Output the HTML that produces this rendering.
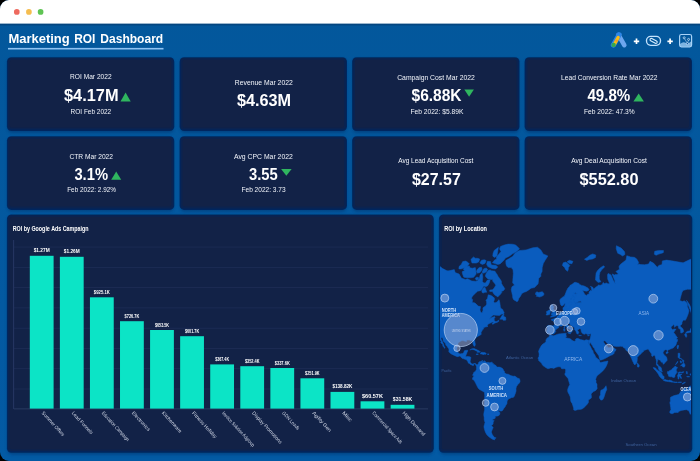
<!DOCTYPE html>
<html lang="en"><head><meta charset="utf-8"><title>Marketing ROI Dashboard</title>
<style>html,body{margin:0;padding:0;background:#000;width:700px;height:461px;overflow:hidden}svg{display:block;will-change:transform}text{font-family:'Liberation Sans', sans-serif;fill:#fff}.lbl{font-size:7px;fill:#f2f5fb}.val{font-size:15.6px;font-weight:bold}.pt{font-size:6.6px;font-weight:bold;fill:#fff}.bv{font-size:4.5px;font-weight:bold;fill:#fff}.xl{font-size:5px;fill:#d6dcea}.ml{font-size:4.5px;fill:#9fc4f2}</style></head><body>
<svg width="700" height="461" viewBox="0 0 700 461">
<defs>
<clipPath id="win"><rect x="0" y="0" width="700" height="461" rx="9" ry="9"/></clipPath>
<linearGradient id="bg" x1="0" y1="0" x2="0" y2="1"><stop offset="0" stop-color="#03579b"/><stop offset="1" stop-color="#035aa4"/></linearGradient>
<filter id="sh" x="-5%" y="-5%" width="110%" height="110%"><feGaussianBlur stdDeviation="0.75"/></filter>
<filter id="sh2" x="-5%" y="-10%" width="110%" height="125%"><feGaussianBlur stdDeviation="1.6"/></filter>
<clipPath id="mapclip"><rect x="440" y="232" width="251" height="219" rx="3"/></clipPath>
<linearGradient id="tsh" x1="0" y1="0" x2="0" y2="1"><stop offset="0" stop-color="#04305f" stop-opacity="0.7"/><stop offset="1" stop-color="#04305f" stop-opacity="0"/></linearGradient>
</defs>
<g clip-path="url(#win)">
<rect x="0" y="0" width="700" height="461" fill="url(#bg)"/>
<rect x="0" y="23.4" width="700" height="3" fill="url(#tsh)"/>
<rect x="0" y="0" width="700" height="23.6" fill="#ffffff"/>
<circle cx="16.8" cy="11.9" r="2.85" fill="#ee6a5f"/>
<circle cx="28.9" cy="11.9" r="2.85" fill="#f5bd4f"/>
<circle cx="40.6" cy="11.9" r="2.85" fill="#5fc454"/>
<text x="8.4" y="43.0" style="font-size:13.1px;font-weight:bold" textLength="61.3" lengthAdjust="spacingAndGlyphs">Marketing</text>
<text x="74.2" y="43.0" style="font-size:13.1px;font-weight:bold" textLength="21.2" lengthAdjust="spacingAndGlyphs">ROI</text>
<text x="100.3" y="43.0" style="font-size:13.1px;font-weight:bold" textLength="62.9" lengthAdjust="spacingAndGlyphs">Dashboard</text>
<rect x="8" y="47.9" width="155.5" height="1.6" fill="#8fc3f3"/>
<rect x="7.5" y="59.0" width="166.2" height="73.7" rx="4.5" fill="#04285e" opacity="0.45" filter="url(#sh2)"/>
<rect x="6.9" y="57.2" width="167.39999999999998" height="73.8" rx="4.5" fill="#04285e" filter="url(#sh)"/>
<rect x="8" y="58" width="165.2" height="71.5" rx="3.2" fill="#0b2350"/>
<rect x="9.8" y="59.8" width="161.6" height="67.9" rx="2" fill="#122247"/>
<rect x="180.2" y="59.0" width="166.2" height="73.7" rx="4.5" fill="#04285e" opacity="0.45" filter="url(#sh2)"/>
<rect x="179.6" y="57.2" width="167.39999999999998" height="73.8" rx="4.5" fill="#04285e" filter="url(#sh)"/>
<rect x="180.7" y="58" width="165.2" height="71.5" rx="3.2" fill="#0b2350"/>
<rect x="182.5" y="59.8" width="161.6" height="67.9" rx="2" fill="#122247"/>
<rect x="352.7" y="59.0" width="166.2" height="73.7" rx="4.5" fill="#04285e" opacity="0.45" filter="url(#sh2)"/>
<rect x="352.09999999999997" y="57.2" width="167.39999999999998" height="73.8" rx="4.5" fill="#04285e" filter="url(#sh)"/>
<rect x="353.2" y="58" width="165.2" height="71.5" rx="3.2" fill="#0b2350"/>
<rect x="355.0" y="59.8" width="161.6" height="67.9" rx="2" fill="#122247"/>
<rect x="525.2" y="59.0" width="166.2" height="73.7" rx="4.5" fill="#04285e" opacity="0.45" filter="url(#sh2)"/>
<rect x="524.6" y="57.2" width="167.39999999999998" height="73.8" rx="4.5" fill="#04285e" filter="url(#sh)"/>
<rect x="525.7" y="58" width="165.2" height="71.5" rx="3.2" fill="#0b2350"/>
<rect x="527.5" y="59.8" width="161.6" height="67.9" rx="2" fill="#122247"/>
<rect x="7.5" y="138.0" width="166.2" height="73.60000000000001" rx="4.5" fill="#04285e" opacity="0.45" filter="url(#sh2)"/>
<rect x="6.9" y="136.2" width="167.39999999999998" height="73.7" rx="4.5" fill="#04285e" filter="url(#sh)"/>
<rect x="8" y="137" width="165.2" height="71.4" rx="3.2" fill="#0b2350"/>
<rect x="9.8" y="138.8" width="161.6" height="67.80000000000001" rx="2" fill="#122247"/>
<rect x="180.2" y="138.0" width="166.2" height="73.60000000000001" rx="4.5" fill="#04285e" opacity="0.45" filter="url(#sh2)"/>
<rect x="179.6" y="136.2" width="167.39999999999998" height="73.7" rx="4.5" fill="#04285e" filter="url(#sh)"/>
<rect x="180.7" y="137" width="165.2" height="71.4" rx="3.2" fill="#0b2350"/>
<rect x="182.5" y="138.8" width="161.6" height="67.80000000000001" rx="2" fill="#122247"/>
<rect x="352.7" y="138.0" width="166.2" height="73.60000000000001" rx="4.5" fill="#04285e" opacity="0.45" filter="url(#sh2)"/>
<rect x="352.09999999999997" y="136.2" width="167.39999999999998" height="73.7" rx="4.5" fill="#04285e" filter="url(#sh)"/>
<rect x="353.2" y="137" width="165.2" height="71.4" rx="3.2" fill="#0b2350"/>
<rect x="355.0" y="138.8" width="161.6" height="67.80000000000001" rx="2" fill="#122247"/>
<rect x="525.2" y="138.0" width="166.2" height="73.60000000000001" rx="4.5" fill="#04285e" opacity="0.45" filter="url(#sh2)"/>
<rect x="524.6" y="136.2" width="167.39999999999998" height="73.7" rx="4.5" fill="#04285e" filter="url(#sh)"/>
<rect x="525.7" y="137" width="165.2" height="71.4" rx="3.2" fill="#0b2350"/>
<rect x="527.5" y="138.8" width="161.6" height="67.80000000000001" rx="2" fill="#122247"/>
<rect x="7.5" y="216.2" width="425.7" height="238.2" rx="4.5" fill="#04285e" opacity="0.45" filter="url(#sh2)"/>
<rect x="6.9" y="214.39999999999998" width="426.9" height="238.3" rx="4.5" fill="#04285e" filter="url(#sh)"/>
<rect x="8" y="215.2" width="424.7" height="236" rx="3.2" fill="#0b2350"/>
<rect x="9.8" y="217.0" width="421.09999999999997" height="232.4" rx="2" fill="#122247"/>
<rect x="439.5" y="216.2" width="252.2" height="238.2" rx="4.5" fill="#04285e" opacity="0.45" filter="url(#sh2)"/>
<rect x="438.9" y="214.39999999999998" width="253.39999999999998" height="238.3" rx="4.5" fill="#04285e" filter="url(#sh)"/>
<rect x="440" y="215.2" width="251.2" height="236" rx="3.2" fill="#0b2350"/>
<rect x="441.8" y="217.0" width="247.6" height="232.4" rx="2" fill="#122247"/>
<text class="lbl" x="70.1" y="79.4" textLength="41.5" lengthAdjust="spacingAndGlyphs">ROI Mar 2022</text>
<text class="val" x="64" y="101.4" textLength="54.5" lengthAdjust="spacingAndGlyphs">$4.17M</text>
<path d="M125.6 92.6 L130.7 101.5 L120.5 101.5 Z" fill="#2fb65f"/>
<text class="lbl" x="70.6" y="113.6" textLength="40.6" lengthAdjust="spacingAndGlyphs">ROI Feb 2022</text>
<text class="lbl" x="234.8" y="85.2" textLength="58.0" lengthAdjust="spacingAndGlyphs">Revenue Mar 2022</text>
<text class="val" x="236.9" y="106" textLength="54.1" lengthAdjust="spacingAndGlyphs">$4.63M</text>
<text class="lbl" x="397.2" y="79.6" textLength="77.6" lengthAdjust="spacingAndGlyphs">Campaign Cost Mar 2022</text>
<text class="val" x="411.5" y="100.9" textLength="50.1" lengthAdjust="spacingAndGlyphs">$6.88K</text>
<path d="M464.3 89.6 L473.9 89.6 L469.1 96.8 Z" fill="#2fb65f"/>
<text class="lbl" x="410.4" y="113.6" textLength="53.0" lengthAdjust="spacingAndGlyphs">Feb 2022: $5.89K</text>
<text class="lbl" x="561" y="79.6" textLength="96.5" lengthAdjust="spacingAndGlyphs">Lead Conversion Rate Mar 2022</text>
<text class="val" x="587.4" y="100.9" textLength="42.9" lengthAdjust="spacingAndGlyphs">49.8%</text>
<path d="M638.65 93.4 L643.9 101.6 L633.4 101.6 Z" fill="#2fb65f"/>
<text class="lbl" x="584" y="113.6" textLength="50.6" lengthAdjust="spacingAndGlyphs">Feb 2022: 47.3%</text>
<text class="lbl" x="69.4" y="158.6" textLength="43.6" lengthAdjust="spacingAndGlyphs">CTR Mar 2022</text>
<text class="val" x="74.4" y="179.8" textLength="33.6" lengthAdjust="spacingAndGlyphs">3.1%</text>
<path d="M116.2 171.6 L121.2 179.8 L111.2 179.8 Z" fill="#2fb65f"/>
<text class="lbl" x="67.2" y="192.4" textLength="48.8" lengthAdjust="spacingAndGlyphs">Feb 2022: 2.92%</text>
<text class="lbl" x="234" y="158.6" textLength="58.8" lengthAdjust="spacingAndGlyphs">Avg CPC Mar 2022</text>
<text class="val" x="249" y="179.6" textLength="28.8" lengthAdjust="spacingAndGlyphs">3.55</text>
<path d="M281.1 168.9 L291.6 168.9 L286.35 175.8 Z" fill="#2fb65f"/>
<text class="lbl" x="241.5" y="192.4" textLength="44.1" lengthAdjust="spacingAndGlyphs">Feb 2022: 3.73</text>
<text class="lbl" x="398.2" y="163" textLength="75.2" lengthAdjust="spacingAndGlyphs">Avg Lead Acquisition Cost</text>
<text class="val" x="412" y="184.8" textLength="48.8" lengthAdjust="spacingAndGlyphs">$27.57</text>
<text class="lbl" x="571.2" y="163" textLength="75.6" lengthAdjust="spacingAndGlyphs">Avg Deal Acquisition Cost</text>
<text class="val" x="579.5" y="184.8" textLength="59.0" lengthAdjust="spacingAndGlyphs">$552.80</text>
<text class="pt" x="12.7" y="231" textLength="75.9" lengthAdjust="spacingAndGlyphs">ROI by Google Ads Campaign</text>
<rect x="14" y="246.70" width="414" height="0.7" fill="#202f58"/>
<rect x="14" y="266.98" width="414" height="0.7" fill="#202f58"/>
<rect x="14" y="287.26" width="414" height="0.7" fill="#202f58"/>
<rect x="14" y="307.54" width="414" height="0.7" fill="#202f58"/>
<rect x="14" y="327.82" width="414" height="0.7" fill="#202f58"/>
<rect x="14" y="348.10" width="414" height="0.7" fill="#202f58"/>
<rect x="14" y="368.38" width="414" height="0.7" fill="#202f58"/>
<rect x="14" y="388.66" width="414" height="0.7" fill="#202f58"/>
<rect x="14" y="408.5" width="414" height="0.8" fill="#2f4069"/>
<rect x="13.3" y="240" width="0.8" height="169" fill="#2d3c6c"/>
<rect x="29.80" y="255.8" width="23.8" height="152.80" fill="#0ce4c6"/>
<text class="bv" x="33.70" y="252.30" textLength="16" lengthAdjust="spacingAndGlyphs">$1.27M</text>
<text class="xl" transform="translate(42.50 412.2) rotate(47.5)" x="0" y="1.6" textLength="31.6" lengthAdjust="spacingAndGlyphs">Summer Offers</text>
<rect x="59.87" y="256.8" width="23.8" height="151.80" fill="#0ce4c6"/>
<text class="bv" x="63.87" y="253.30" textLength="15.8" lengthAdjust="spacingAndGlyphs">$1.26M</text>
<text class="xl" transform="translate(72.57 412.2) rotate(47.5)" x="0" y="1.6" textLength="28.9" lengthAdjust="spacingAndGlyphs">Lead Funnels</text>
<rect x="89.94" y="297.3" width="23.8" height="111.30" fill="#0ce4c6"/>
<text class="bv" x="93.84" y="293.80" textLength="16" lengthAdjust="spacingAndGlyphs">$925.1K</text>
<text class="xl" transform="translate(102.64 412.2) rotate(47.5)" x="0" y="1.6" textLength="38.3" lengthAdjust="spacingAndGlyphs">Education Campaign</text>
<rect x="120.01" y="321.2" width="23.8" height="87.40" fill="#0ce4c6"/>
<text class="bv" x="124.61" y="317.70" textLength="14.6" lengthAdjust="spacingAndGlyphs">$726.7K</text>
<text class="xl" transform="translate(132.71 412.2) rotate(47.5)" x="0" y="1.6" textLength="24.6" lengthAdjust="spacingAndGlyphs">Electronics</text>
<rect x="150.08" y="330" width="23.8" height="78.60" fill="#0ce4c6"/>
<text class="bv" x="154.88" y="326.50" textLength="14.2" lengthAdjust="spacingAndGlyphs">$653.5K</text>
<text class="xl" transform="translate(162.78 412.2) rotate(47.5)" x="0" y="1.6" textLength="27.0" lengthAdjust="spacingAndGlyphs">Kitchenware</text>
<rect x="180.15" y="336.2" width="23.8" height="72.40" fill="#0ce4c6"/>
<text class="bv" x="184.95" y="332.70" textLength="14.2" lengthAdjust="spacingAndGlyphs">$601.7K</text>
<text class="xl" transform="translate(192.85 412.2) rotate(47.5)" x="0" y="1.6" textLength="34.5" lengthAdjust="spacingAndGlyphs">Fitness Holiday</text>
<rect x="210.22" y="364.4" width="23.8" height="44.20" fill="#0ce4c6"/>
<text class="bv" x="215.22" y="360.90" textLength="13.8" lengthAdjust="spacingAndGlyphs">$367.4K</text>
<text class="xl" transform="translate(222.92 412.2) rotate(47.5)" x="0" y="1.6" textLength="45.5" lengthAdjust="spacingAndGlyphs">Invoice Solution Adgroup</text>
<rect x="240.29" y="366.2" width="23.8" height="42.40" fill="#0ce4c6"/>
<text class="bv" x="244.89" y="362.70" textLength="14.6" lengthAdjust="spacingAndGlyphs">$352.4K</text>
<text class="xl" transform="translate(252.99 412.2) rotate(47.5)" x="0" y="1.6" textLength="41.7" lengthAdjust="spacingAndGlyphs">Display Promotions</text>
<rect x="270.36" y="368" width="23.8" height="40.60" fill="#0ce4c6"/>
<text class="bv" x="274.76" y="364.50" textLength="15" lengthAdjust="spacingAndGlyphs">$337.6K</text>
<text class="xl" transform="translate(283.06 412.2) rotate(47.5)" x="0" y="1.6" textLength="23.2" lengthAdjust="spacingAndGlyphs">GDN Leads</text>
<rect x="300.43" y="378.3" width="23.8" height="30.30" fill="#0ce4c6"/>
<text class="bv" x="305.03" y="374.80" textLength="14.6" lengthAdjust="spacingAndGlyphs">$251.9K</text>
<text class="xl" transform="translate(313.13 412.2) rotate(47.5)" x="0" y="1.6" textLength="25.8" lengthAdjust="spacingAndGlyphs">Agility Gen</text>
<rect x="330.50" y="391.9" width="23.8" height="16.70" fill="#0ce4c6"/>
<text class="bv" x="332.40" y="388.40" textLength="20" lengthAdjust="spacingAndGlyphs">$138.82K</text>
<text class="xl" transform="translate(343.20 412.2) rotate(47.5)" x="0" y="1.6" textLength="11.8" lengthAdjust="spacingAndGlyphs">Misc</text>
<rect x="360.57" y="401.3" width="23.8" height="7.30" fill="#0ce4c6"/>
<text class="bv" x="361.97" y="397.80" textLength="21" lengthAdjust="spacingAndGlyphs">$60.57K</text>
<text class="xl" transform="translate(373.27 412.2) rotate(47.5)" x="0" y="1.6" textLength="41.7" lengthAdjust="spacingAndGlyphs">Commercial Space Ads</text>
<rect x="390.64" y="404.8" width="23.8" height="3.80" fill="#0ce4c6"/>
<text class="bv" x="392.79" y="401.30" textLength="19.5" lengthAdjust="spacingAndGlyphs">$31.58K</text>
<text class="xl" transform="translate(403.34 412.2) rotate(47.5)" x="0" y="1.6" textLength="31.0" lengthAdjust="spacingAndGlyphs">High Demand</text>
<text class="pt" x="444.2" y="231" textLength="42.8" lengthAdjust="spacingAndGlyphs">ROI by Location</text>
<g clip-path="url(#mapclip)" id="map">
<path d="M433.7 260.1 L438.3 265.0 L442.7 268.6 L447.0 270.8 L448.9 270.8 L454.3 269.6 L455.2 272.6 L459.1 274.0 L461.4 278.1 L465.3 279.5 L467.5 278.8 L471.9 281.0 L475.4 281.2 L477.3 280.9 L479.3 278.5 L480.1 275.0 L482.1 272.8 L482.8 276.8 L482.6 279.1 L482.4 281.4 L483.6 282.8 L485.3 283.1 L487.4 280.1 L490.1 279.9 L489.4 282.7 L487.8 285.7 L485.6 286.8 L483.8 286.1 L482.1 288.9 L480.5 290.7 L477.6 291.2 L476.2 292.4 L473.2 295.4 L471.9 297.1 L471.7 299.3 L472.7 299.6 L472.2 302.5 L474.5 302.8 L476.0 303.8 L478.2 306.1 L480.6 306.6 L480.0 309.9 L480.5 311.5 L481.2 312.8 L482.2 312.4 L483.0 310.2 L482.9 307.8 L485.8 305.7 L486.7 304.1 L486.5 301.6 L485.9 300.6 L487.5 298.2 L488.2 294.8 L490.7 295.3 L493.0 296.7 L494.4 298.1 L494.4 299.8 L493.7 301.5 L494.7 302.9 L497.0 302.1 L498.4 300.2 L499.0 299.6 L499.7 302.0 L500.1 304.5 L500.4 306.9 L501.0 308.5 L502.7 309.4 L503.3 310.9 L504.2 312.5 L503.7 313.7 L501.3 314.2 L499.6 315.4 L495.9 315.3 L493.5 315.1 L491.8 316.3 L489.4 318.7 L491.6 317.5 L494.6 316.6 L495.2 317.2 L494.3 318.3 L494.3 319.6 L494.3 320.8 L495.7 321.4 L497.1 321.6 L498.5 319.9 L498.8 321.3 L497.5 322.2 L494.9 323.0 L492.7 324.4 L492.2 323.3 L494.1 322.0 L492.7 322.1 L491.6 322.6 L490.0 323.2 L488.4 323.9 L487.5 325.0 L487.1 325.7 L488.0 326.1 L487.3 326.7 L486.4 326.8 L485.4 327.1 L483.8 327.6 L483.6 328.9 L482.7 329.8 L482.1 329.1 L482.3 330.4 L481.3 332.0 L481.1 332.4 L481.2 333.8 L481.2 334.5 L480.2 335.1 L478.7 335.9 L477.4 336.7 L476.3 337.5 L475.2 338.5 L474.6 340.0 L475.0 342.4 L475.4 344.4 L474.9 346.1 L474.2 346.3 L473.5 345.3 L472.7 343.2 L473.0 341.8 L471.9 340.5 L470.5 340.9 L469.4 340.0 L467.9 340.1 L466.4 340.2 L466.5 341.5 L465.2 341.3 L463.8 340.8 L462.0 340.6 L460.7 341.2 L459.0 342.2 L458.1 343.2 L457.9 345.0 L457.2 346.7 L456.8 349.0 L457.3 351.0 L458.1 352.7 L459.3 353.5 L460.0 353.9 L461.8 353.5 L462.8 353.6 L463.7 352.5 L464.2 351.1 L464.6 350.6 L466.2 350.3 L467.7 350.3 L467.8 351.1 L467.0 352.6 L466.6 353.9 L466.1 354.8 L465.7 356.2 L465.3 356.6 L466.6 356.6 L468.2 356.5 L469.7 356.7 L471.0 357.5 L470.6 359.1 L470.3 360.8 L470.2 361.8 L470.9 362.9 L471.7 363.7 L472.9 364.1 L474.1 363.5 L475.5 363.5 L476.6 364.4 L477.2 365.0 L478.4 363.4 L478.6 362.4 L479.3 361.7 L480.7 361.5 L482.0 360.8 L482.8 360.4 L482.9 361.0 L482.3 361.9 L482.7 362.1 L484.0 361.3 L484.3 360.6 L484.8 361.3 L486.0 361.9 L486.2 362.4 L488.3 362.3 L489.8 362.7 L491.4 362.2 L492.4 362.2 L491.8 362.9 L493.4 363.5 L493.8 364.5 L495.4 365.0 L496.4 366.3 L497.4 367.1 L499.4 367.1 L500.4 367.3 L501.9 368.1 L503.0 368.9 L503.5 370.2 L504.5 371.4 L504.5 372.8 L505.5 373.3 L506.0 373.8 L506.5 374.0 L508.6 374.3 L510.1 375.3 L511.6 375.8 L513.2 376.2 L514.7 376.1 L516.3 377.1 L517.8 378.2 L519.3 378.6 L519.9 379.9 L520.1 381.5 L519.4 383.0 L517.9 384.6 L516.4 386.7 L516.0 388.8 L516.1 390.9 L515.5 393.0 L514.9 394.7 L514.3 396.3 L513.3 397.4 L511.8 397.4 L510.4 398.2 L508.9 398.7 L507.5 400.2 L507.0 401.9 L507.0 403.6 L505.9 405.3 L505.0 407.0 L504.0 408.2 L502.9 410.0 L502.0 411.0 L500.5 411.1 L498.6 410.6 L498.0 410.1 L498.2 410.9 L499.4 411.9 L500.0 413.1 L499.5 414.9 L498.1 415.9 L495.2 416.3 L495.3 418.2 L493.9 419.1 L492.7 418.9 L492.9 420.2 L494.3 420.8 L493.2 421.9 L493.1 424.2 L491.4 425.6 L493.2 427.6 L492.2 429.8 L491.3 432.0 L492.3 434.6 L493.0 435.6 L494.3 437.3 L496.2 437.9 L494.7 438.8 L494.7 439.9 L492.4 439.2 L490.2 437.8 L488.5 436.4 L486.6 434.5 L485.2 431.7 L484.3 428.8 L483.9 426.7 L484.4 424.6 L485.0 422.6 L484.2 419.9 L484.1 417.3 L483.7 414.8 L484.0 412.3 L484.6 409.9 L484.5 406.9 L484.4 404.5 L484.6 401.1 L484.6 398.2 L484.7 395.4 L484.4 392.6 L483.1 391.4 L480.9 390.3 L479.1 389.2 L477.9 387.7 L476.9 385.8 L475.8 383.6 L474.9 381.8 L473.8 380.0 L472.6 379.5 L472.5 377.9 L473.5 376.8 L473.8 375.8 L472.7 375.5 L472.9 374.3 L473.7 373.1 L473.7 372.4 L475.0 371.7 L475.8 370.6 L476.5 369.3 L476.4 367.6 L476.5 366.0 L476.0 365.8 L475.6 364.8 L474.9 363.9 L474.4 364.0 L473.6 364.7 L473.5 365.6 L472.8 365.8 L472.3 365.3 L471.0 364.7 L470.3 364.5 L469.3 363.4 L468.1 362.9 L468.1 361.9 L467.1 360.7 L466.5 359.7 L464.9 359.3 L463.6 358.8 L462.4 358.6 L461.7 357.9 L460.5 356.6 L459.2 356.1 L458.0 356.7 L456.5 356.4 L455.0 355.7 L454.0 355.3 L452.2 354.4 L450.6 353.6 L449.2 352.3 L448.7 351.3 L449.1 350.0 L448.6 348.5 L448.1 347.9 L446.8 346.1 L445.7 344.9 L445.6 343.8 L444.8 342.8 L444.3 342.2 L443.2 340.9 L443.0 339.3 L442.8 338.1 L441.4 337.4 L441.1 338.3 L441.4 339.6 L442.4 341.5 L442.9 342.8 L443.7 344.6 L444.0 345.8 L444.4 346.8 L445.1 348.0 L444.5 348.3 L444.1 347.6 L442.8 346.1 L442.8 344.6 L441.6 343.6 L440.7 342.4 L441.2 341.5 L440.4 340.2 L439.8 338.6 L439.3 336.9 L439.1 336.0 L438.2 334.3 L436.3 333.5 L435.5 330.7 L435.2 328.9 L434.5 326.4 L434.3 325.1 L435.0 322.8 L435.1 321.3 L436.5 318.3 L437.0 316.3 L437.3 313.1 L438.9 313.5 L439.1 314.6 L439.5 312.2 L439.3 311.7 L438.4 310.4 L436.6 308.5 L436.6 305.8 L435.9 302.4 L435.8 300.1 L435.1 297.0 L434.6 293.9 L433.0 292.9 L431.7 290.5 L429.7 289.6 L427.9 289.3 L426.9 287.2 L423.8 288.4 L421.8 289.5 L420.4 289.2 L422.7 285.8 L421.3 286.6 L418.9 288.4 L416.9 290.3 L414.6 292.0 L411.8 293.6 L408.5 295.2 L405.6 296.1 L407.4 294.3 L409.9 293.2 L413.0 291.0 L415.0 289.1 L413.0 289.1 L410.5 288.1 L411.8 285.5 L410.2 283.9 L410.6 281.4 L411.2 279.5 L413.7 277.8 L417.1 278.0 L418.5 275.7 L416.8 275.2 L414.3 274.4 L414.3 271.2 L417.1 270.1 L419.5 270.3 L420.2 271.4 L421.5 269.4 L421.1 267.2 L420.4 264.7 L422.5 263.8 L425.2 262.9 L427.3 261.3 L430.4 260.5Z M519.4 250.5 L526.0 249.9 L532.7 247.8 L537.5 247.2 L540.9 250.0 L543.2 253.9 L547.9 255.9 L545.0 260.6 L543.3 263.6 L542.2 267.7 L542.1 271.6 L540.8 274.0 L540.9 276.3 L538.7 278.5 L538.5 280.7 L538.1 283.8 L536.3 285.8 L534.5 287.6 L531.1 288.2 L528.4 290.2 L526.5 291.4 L524.2 292.3 L521.9 293.4 L520.6 296.0 L518.8 298.5 L518.0 300.9 L516.9 301.8 L515.3 300.7 L513.7 299.8 L512.8 298.0 L512.5 295.4 L511.8 292.6 L511.2 289.7 L511.9 286.8 L514.5 285.1 L512.6 282.8 L512.8 280.6 L513.0 277.3 L513.3 273.7 L513.0 269.8 L511.2 267.6 L508.1 267.6 L506.5 265.9 L505.9 263.7 L505.8 260.6 L508.8 258.8 L512.8 256.3 L514.9 253.2 L517.8 251.3Z M535.2 293.3 L536.9 291.7 L538.6 292.5 L540.6 292.0 L542.3 291.7 L543.4 292.7 L544.1 294.1 L543.3 295.5 L541.1 296.6 L539.3 297.1 L537.7 296.4 L536.2 296.3 L536.9 295.3 L535.3 294.3 L536.7 293.9Z M504.8 288.8 L503.7 290.4 L501.6 291.6 L501.8 292.5 L499.8 295.1 L498.6 295.9 L497.9 296.9 L496.4 296.0 L494.5 294.8 L493.5 293.4 L492.4 291.6 L489.7 291.4 L489.7 290.0 L492.5 289.8 L494.1 288.1 L495.8 285.2 L494.7 283.5 L492.6 281.0 L492.8 279.4 L490.2 279.4 L487.9 279.0 L486.3 277.5 L485.3 276.1 L486.2 273.3 L488.4 270.3 L490.3 269.9 L491.5 270.8 L493.9 271.0 L495.0 271.2 L496.2 273.3 L497.0 274.2 L498.2 276.6 L499.3 278.0 L500.4 279.6 L501.4 281.3 L501.5 283.5 L502.9 285.8 L504.1 287.5Z M519.5 248.9 L516.3 251.7 L512.6 253.8 L509.3 256.2 L505.5 258.0 L503.5 260.7 L500.0 263.9 L497.7 264.6 L495.0 263.6 L492.4 262.7 L494.5 260.1 L496.7 259.0 L496.2 257.2 L498.5 254.4 L501.0 251.4 L499.6 249.0 L500.5 246.4 L504.2 245.0 L508.2 244.1 L512.8 244.2 L515.6 245.0 L517.8 246.9Z M494.2 250.4 L498.4 247.3 L497.9 250.4 L497.0 255.7 L494.5 257.4 L492.8 256.2 L493.0 253.4Z M497.8 266.9 L495.7 269.0 L491.9 268.4 L487.8 266.6 L486.6 264.2 L487.4 261.3 L490.5 261.5 L491.1 264.2 L491.9 265.0 L495.8 265.3Z M462.3 273.2 L463.0 275.2 L463.8 277.2 L467.1 277.8 L470.7 277.8 L473.7 277.3 L476.2 274.1 L475.8 270.0 L475.3 267.6 L472.4 268.2 L469.9 267.8 L469.3 265.9 L465.4 266.5 L463.2 269.3 L464.7 270.6 L462.3 271.6Z M459.0 266.6 L458.9 268.9 L461.1 269.0 L464.8 267.5 L467.4 266.2 L469.3 263.8 L468.0 262.4 L465.8 261.0 L462.7 261.6 L461.4 264.3Z M470.9 259.4 L472.0 263.0 L476.3 263.1 L478.7 261.9 L479.7 259.0 L477.6 258.3 L475.2 258.2 L473.5 256.9Z M476.3 271.5 L477.5 273.3 L480.1 272.4 L482.1 269.4 L481.6 267.3 L479.3 267.5 L477.6 269.0Z M481.9 272.3 L483.6 273.2 L486.5 271.8 L487.6 269.3 L486.2 268.1 L483.8 268.7Z M479.8 262.9 L482.3 264.5 L485.0 263.4 L486.2 260.6 L484.3 259.7 L481.5 260.2Z M475.2 278.3 L476.3 280.2 L478.4 279.5 L478.8 277.7 L476.9 277.0Z M481.7 290.5 L483.5 287.7 L484.9 287.3 L485.6 289.0 L486.3 290.9 L486.8 292.2 L484.9 292.3 L483.3 293.0 L482.1 292.5Z M499.7 319.2 L501.0 317.3 L502.2 315.2 L503.9 313.7 L503.9 315.3 L503.3 316.0 L504.6 316.8 L505.5 317.1 L505.8 318.2 L505.9 319.6 L505.2 320.6 L504.5 320.2 L503.1 320.3 L502.8 319.3 L500.9 319.2Z M435.3 308.6 L437.3 309.4 L438.2 311.2 L438.7 312.9 L437.6 312.8 L436.6 311.5 L435.3 309.9Z M469.8 349.9 L471.9 348.7 L474.0 348.5 L475.9 349.3 L477.8 350.2 L479.3 351.0 L480.5 351.9 L479.7 352.3 L477.0 352.2 L477.5 351.5 L476.3 351.0 L474.3 349.9 L472.9 349.4 L471.3 349.6 L470.3 350.0Z M480.2 353.9 L481.4 352.3 L481.9 352.3 L483.0 352.4 L484.8 352.5 L486.3 353.6 L486.0 354.2 L484.1 354.2 L483.1 354.7 L482.1 354.1Z M476.2 353.9 L478.3 354.0 L478.2 354.4 L476.2 354.4Z M487.5 353.9 L489.0 354.0 L488.9 354.4 L487.5 354.4Z M575.5 282.3 L579.0 283.4 L580.0 284.7 L581.8 285.4 L584.3 286.0 L588.0 288.1 L589.2 289.9 L587.0 291.2 L584.4 290.9 L582.6 290.6 L584.4 293.6 L585.0 294.8 L586.9 295.4 L587.5 294.3 L589.2 294.0 L588.9 292.4 L590.2 290.6 L591.9 290.8 L591.2 287.4 L590.4 286.3 L592.8 287.3 L593.7 289.2 L594.7 287.9 L597.5 286.0 L598.9 284.8 L599.9 285.5 L602.2 284.6 L603.2 282.4 L604.4 283.5 L607.1 282.9 L607.8 283.7 L609.5 283.8 L609.0 282.2 L607.7 279.0 L607.5 274.8 L608.2 273.4 L611.0 274.9 L613.4 280.4 L615.2 283.4 L614.6 280.2 L612.1 273.9 L614.6 275.0 L615.2 274.4 L616.9 274.5 L618.4 274.0 L615.9 271.4 L619.5 269.2 L619.0 266.6 L620.3 264.5 L623.1 262.2 L626.0 260.0 L626.8 255.7 L630.6 256.9 L634.4 257.3 L636.7 258.9 L638.7 262.5 L637.6 265.0 L638.8 264.0 L640.9 264.6 L644.6 264.7 L648.6 264.0 L650.0 261.3 L653.5 263.1 L657.3 267.3 L658.8 265.4 L662.0 264.6 L662.3 260.9 L666.4 260.1 L671.7 260.8 L683.1 262.8 L690.4 259.3 L698.5 259.6 L705.7 269.4 L706.7 270.6 L710.6 275.2 L706.8 280.5 L706.3 283.2 L701.9 284.4 L702.4 289.1 L703.5 293.5 L704.3 299.7 L702.8 304.1 L700.6 300.4 L697.5 294.7 L696.9 290.3 L696.9 284.4 L697.6 280.4 L695.6 282.2 L692.1 283.1 L693.8 288.0 L691.4 289.3 L687.4 289.3 L683.0 290.4 L682.0 292.4 L681.0 295.8 L679.8 300.6 L682.5 301.5 L684.2 300.8 L686.3 302.2 L687.5 304.5 L687.4 306.4 L689.0 310.7 L688.1 314.3 L686.7 317.7 L685.4 320.3 L683.4 320.1 L682.5 321.6 L681.9 322.9 L682.1 323.9 L680.3 325.6 L680.5 326.4 L682.9 328.7 L683.6 330.8 L683.4 332.1 L682.0 332.7 L680.8 333.1 L680.6 331.0 L680.5 329.6 L678.5 328.3 L678.3 326.2 L677.1 325.5 L675.9 326.0 L674.5 327.3 L674.1 325.0 L673.5 324.5 L672.4 326.1 L671.1 327.1 L671.1 328.1 L672.7 329.7 L674.1 329.0 L676.2 329.3 L674.9 330.5 L674.4 331.4 L673.7 332.8 L675.0 334.1 L676.1 336.0 L677.2 337.0 L677.3 338.1 L676.1 338.9 L677.7 339.5 L677.5 341.1 L676.7 342.4 L676.2 344.3 L675.6 345.6 L674.7 346.2 L673.6 347.7 L671.3 348.8 L670.5 349.0 L668.8 349.8 L667.6 350.3 L667.5 351.3 L666.8 349.9 L665.5 349.7 L664.0 350.6 L663.6 351.7 L662.9 352.9 L663.9 354.3 L665.0 355.7 L666.4 356.8 L667.1 359.0 L667.1 360.6 L666.0 361.7 L665.0 362.4 L664.7 363.3 L663.0 364.3 L663.0 362.8 L662.4 362.4 L661.4 362.2 L660.7 361.0 L659.7 360.1 L658.6 359.9 L658.1 359.0 L657.6 359.4 L657.7 360.7 L657.3 361.7 L657.0 363.4 L657.9 364.4 L658.4 365.8 L659.5 366.2 L660.4 366.8 L661.5 368.3 L661.7 370.2 L662.4 371.8 L661.6 371.8 L659.4 370.4 L658.6 369.1 L658.3 367.6 L658.2 366.5 L657.2 365.7 L656.4 364.9 L656.4 363.4 L656.5 361.7 L656.1 359.6 L655.5 358.0 L655.1 356.3 L654.5 355.2 L653.3 355.8 L652.3 356.6 L651.6 355.8 L651.6 354.1 L650.5 352.5 L649.3 350.8 L648.4 349.3 L647.1 349.3 L645.6 349.9 L643.7 350.4 L643.6 351.4 L642.8 352.1 L641.8 352.8 L640.9 353.9 L639.3 355.3 L638.3 356.2 L637.3 357.2 L637.3 359.2 L637.1 361.3 L636.9 362.6 L636.4 363.6 L635.6 364.0 L634.9 364.9 L633.9 363.9 L633.3 362.4 L632.4 360.8 L631.6 358.6 L630.8 357.0 L630.0 355.4 L629.5 353.2 L629.2 351.0 L628.9 349.7 L628.0 351.2 L627.0 351.3 L625.3 349.6 L626.3 349.2 L624.7 348.3 L623.6 347.8 L622.7 346.6 L620.5 346.3 L617.5 346.6 L614.9 346.3 L613.2 346.0 L612.7 344.5 L611.7 344.5 L610.3 345.0 L608.2 344.0 L606.5 342.6 L605.6 341.2 L604.4 340.8 L603.4 341.4 L604.1 343.0 L605.2 344.3 L606.0 345.4 L606.7 347.1 L607.0 345.6 L607.5 346.8 L607.3 347.6 L609.0 347.8 L610.5 347.5 L611.9 346.0 L612.2 345.3 L612.5 347.0 L613.6 348.1 L614.9 348.4 L616.0 349.5 L615.3 351.2 L614.2 352.1 L614.1 353.4 L613.0 354.5 L611.7 355.1 L610.5 355.5 L608.7 356.4 L606.5 357.7 L604.5 358.8 L601.5 360.0 L600.0 360.1 L599.5 358.8 L599.1 357.4 L598.8 355.8 L597.7 354.2 L596.4 352.4 L595.2 350.8 L594.4 348.6 L593.1 347.0 L592.2 345.3 L591.1 343.7 L590.4 342.0 L589.8 343.9 L588.9 342.8 L588.1 341.5 L588.1 342.0 L589.1 343.7 L589.9 345.4 L591.0 347.6 L591.7 349.2 L593.0 350.8 L593.4 353.0 L594.7 354.6 L595.8 357.2 L597.4 358.6 L599.0 359.8 L599.8 360.6 L599.7 361.4 L600.6 362.4 L602.6 362.1 L605.2 361.6 L607.9 361.0 L607.7 362.5 L606.8 365.0 L605.8 367.1 L604.3 369.2 L602.8 370.9 L600.2 373.3 L598.4 374.8 L597.1 375.8 L596.3 377.4 L595.6 379.4 L596.1 380.5 L596.0 382.5 L597.0 384.1 L597.0 386.7 L597.2 388.6 L595.8 390.4 L593.2 391.8 L592.1 392.9 L591.0 393.9 L591.4 395.7 L591.4 397.9 L588.8 399.8 L588.4 400.6 L588.5 402.3 L587.5 403.9 L586.5 405.0 L584.9 406.7 L583.3 408.3 L581.3 409.3 L578.8 409.6 L577.3 409.8 L575.3 410.4 L573.7 409.9 L573.6 408.0 L572.8 405.5 L572.1 403.4 L570.9 401.6 L570.5 399.4 L570.3 397.0 L569.2 394.6 L567.8 391.9 L567.6 389.8 L568.4 387.2 L569.8 384.6 L569.2 382.5 L568.3 379.4 L568.0 378.4 L566.9 377.2 L565.4 375.6 L564.7 374.1 L565.4 372.8 L565.6 370.9 L565.6 369.5 L564.6 368.7 L562.8 368.8 L561.8 368.9 L560.8 367.3 L560.1 366.8 L558.2 366.8 L556.9 367.1 L555.7 367.5 L553.6 368.4 L552.1 367.9 L550.6 368.0 L548.0 368.8 L546.5 368.1 L544.6 366.8 L542.9 365.6 L542.1 364.5 L541.7 363.5 L540.4 362.0 L538.6 360.6 L538.6 359.5 L537.9 358.1 L538.9 356.7 L539.1 354.6 L539.0 353.0 L538.5 351.4 L539.6 348.8 L541.1 346.0 L542.7 344.1 L544.7 343.0 L545.9 341.6 L545.9 339.9 L547.2 337.9 L548.9 337.1 L549.8 335.0 L550.4 334.9 L552.7 335.6 L553.7 335.8 L555.6 335.0 L558.6 333.9 L560.5 333.8 L563.0 333.6 L565.4 333.2 L566.4 333.6 L565.9 334.8 L566.5 336.5 L565.5 337.1 L566.5 337.9 L568.0 338.3 L568.7 338.3 L570.8 339.0 L571.5 340.1 L573.5 341.0 L575.0 341.2 L575.5 340.4 L575.4 339.3 L576.9 338.3 L578.4 338.6 L580.4 339.6 L582.7 340.0 L584.4 340.5 L585.4 340.0 L586.4 339.7 L587.7 340.0 L588.9 340.2 L589.7 340.0 L590.1 338.8 L590.3 337.8 L590.7 336.2 L590.9 335.1 L590.9 333.9 L590.4 333.8 L588.9 334.3 L587.5 334.4 L585.9 333.6 L584.5 334.3 L583.0 333.8 L582.3 333.2 L581.4 331.9 L581.0 330.4 L581.0 329.8 L580.7 328.9 L579.3 328.8 L578.6 329.6 L577.7 329.4 L577.7 330.7 L578.5 331.7 L579.0 332.6 L578.1 333.0 L578.3 334.1 L577.6 334.1 L576.8 333.7 L576.3 332.6 L576.0 331.2 L575.0 330.3 L574.4 329.3 L574.4 327.9 L573.4 326.9 L571.4 325.7 L569.9 324.4 L569.4 323.4 L568.5 323.8 L568.6 322.9 L567.3 323.3 L567.4 324.7 L568.6 325.7 L569.5 327.2 L571.0 327.6 L572.5 328.9 L573.5 329.8 L572.0 329.4 L571.9 330.6 L572.2 331.2 L571.7 331.9 L570.9 332.4 L571.2 331.3 L570.6 330.0 L569.4 329.0 L567.6 328.2 L566.2 327.1 L565.5 325.7 L564.7 324.7 L564.0 324.6 L562.8 325.4 L561.3 326.2 L559.9 325.9 L558.7 326.1 L558.6 327.1 L558.7 327.7 L557.7 328.3 L556.4 329.1 L555.3 330.7 L555.8 331.5 L554.9 332.8 L553.7 333.9 L551.3 334.0 L550.3 334.7 L549.6 334.2 L548.8 333.4 L547.0 333.6 L547.1 331.8 L546.5 331.6 L547.1 330.0 L547.2 328.2 L546.8 326.4 L548.0 325.5 L550.3 325.6 L552.3 325.8 L554.0 325.9 L554.5 324.5 L554.5 323.0 L553.7 321.6 L553.5 320.9 L551.5 320.3 L551.2 319.5 L552.8 319.0 L554.1 319.1 L553.9 317.8 L554.5 318.2 L555.8 318.0 L557.0 317.2 L557.1 316.1 L558.8 315.4 L559.4 314.3 L560.0 313.2 L561.0 312.6 L561.9 312.5 L563.3 312.2 L563.5 311.3 L563.0 309.6 L562.9 307.7 L564.0 307.1 L565.0 306.3 L564.8 308.0 L565.2 308.6 L564.6 309.6 L564.3 310.5 L564.6 311.0 L565.6 311.7 L566.5 311.4 L567.8 311.1 L568.6 311.8 L570.3 311.2 L572.3 310.6 L573.5 311.0 L574.5 309.8 L574.4 307.9 L574.7 306.6 L575.6 306.1 L577.0 306.9 L577.2 305.1 L576.2 303.9 L577.5 303.2 L580.1 302.9 L581.8 302.4 L580.4 301.3 L578.2 301.7 L577.3 302.3 L575.5 302.6 L574.0 301.4 L574.0 299.6 L573.6 297.6 L574.6 296.2 L576.0 294.4 L576.7 293.7 L575.6 292.7 L573.8 293.3 L573.4 295.1 L572.9 296.5 L571.3 298.1 L570.5 299.9 L570.5 301.5 L571.9 302.6 L571.8 303.9 L570.6 304.8 L570.3 306.5 L570.0 308.3 L568.6 308.6 L568.4 309.7 L567.3 309.7 L566.9 308.5 L566.2 306.9 L566.0 306.3 L565.4 304.3 L564.8 303.2 L564.2 304.3 L563.1 305.6 L561.7 305.9 L560.6 304.7 L560.1 302.8 L559.8 300.4 L560.2 299.3 L561.5 297.9 L562.9 296.9 L564.3 296.2 L565.1 294.4 L565.8 292.7 L566.5 290.8 L567.2 289.5 L567.9 288.1 L569.1 286.9 L570.1 285.3 L571.6 284.6 L573.1 283.5 L574.1 282.6Z M550.3 317.2 L552.3 316.9 L554.2 316.4 L556.8 315.7 L556.5 315.3 L557.1 313.8 L555.8 313.2 L555.6 312.4 L555.4 311.5 L554.4 310.4 L553.7 309.2 L552.8 308.9 L553.7 307.5 L553.9 306.6 L552.0 306.4 L552.8 305.0 L551.1 305.0 L550.6 306.7 L550.0 307.9 L550.6 309.2 L551.2 310.4 L551.0 310.8 L552.5 310.5 L552.3 311.4 L552.8 312.7 L551.4 312.8 L551.6 313.5 L551.8 314.2 L550.8 314.8 L552.6 315.3 L552.8 315.7 L551.4 315.9Z M546.3 315.1 L547.7 315.0 L549.8 314.3 L550.1 312.8 L550.6 311.1 L549.9 310.1 L548.8 309.9 L547.8 310.9 L546.5 311.5 L546.6 312.8 L546.9 313.8 L546.1 314.4Z M562.4 265.4 L563.2 262.8 L565.7 262.1 L567.9 263.4 L569.9 265.6 L568.4 267.6 L568.3 269.5 L567.5 271.3 L565.5 269.6 L564.6 267.5Z M567.0 261.7 L569.4 260.3 L572.9 261.3 L572.0 263.7 L569.3 263.6Z M584.4 259.2 L587.2 257.4 L589.8 255.2 L592.6 253.9 L595.8 255.0 L595.5 257.5 L592.6 259.1 L589.3 259.4 L586.8 260.4Z M598.2 282.4 L600.9 281.8 L599.3 279.1 L599.3 275.6 L599.9 272.6 L601.9 269.6 L604.7 266.9 L603.5 265.7 L600.4 267.7 L597.6 270.4 L596.1 272.9 L595.7 276.8 L595.5 280.1Z M617.7 253.3 L616.2 248.7 L616.4 245.7 L621.2 248.1 L624.6 251.7 L624.9 254.5 L622.6 256.0 L620.0 254.3Z M654.3 254.2 L654.7 251.3 L658.6 250.4 L663.5 250.6 L663.3 252.7 L658.9 254.1 L656.1 255.3Z M685.7 333.5 L687.1 333.0 L689.5 332.4 L691.5 332.3 L693.4 331.6 L695.0 330.5 L694.4 327.2 L694.8 324.9 L693.5 322.0 L692.4 322.8 L692.6 325.0 L692.2 328.4 L690.7 328.5 L690.1 330.4 L689.7 331.0 L687.3 331.3 L685.6 332.8Z M684.8 334.1 L685.8 333.8 L686.8 334.8 L686.7 336.8 L686.1 337.4 L685.4 336.2 L684.7 334.9Z M691.8 321.2 L692.7 319.1 L691.9 315.7 L696.5 318.4 L695.2 320.9 L692.6 320.4Z M686.5 300.3 L689.4 304.3 L691.2 308.6 L692.0 312.9 L691.8 314.7 L690.1 309.7 L688.0 304.5Z M677.6 345.3 L678.7 345.5 L678.3 347.5 L677.9 349.1 L677.2 347.9 L677.1 346.5Z M666.0 352.5 L667.2 351.5 L668.3 352.0 L667.8 353.0 L666.9 353.7 L666.0 353.3Z M637.2 363.2 L637.6 363.1 L638.7 364.4 L639.3 365.5 L639.1 366.7 L638.1 367.2 L637.5 366.9 L637.3 365.5 L637.3 364.1Z M606.0 385.7 L606.8 389.4 L605.9 391.5 L605.3 393.1 L604.1 396.9 L602.9 399.6 L601.0 400.2 L599.9 399.1 L599.3 396.9 L600.5 394.7 L600.5 392.5 L600.9 390.2 L602.7 389.6 L604.3 388.3 L605.4 386.7Z M653.2 367.5 L655.5 367.9 L656.7 369.4 L658.4 370.7 L659.6 371.2 L661.5 372.8 L662.2 374.3 L662.7 375.6 L664.2 376.6 L663.9 379.3 L662.6 379.3 L660.4 377.4 L659.1 375.8 L658.3 374.1 L657.1 372.4 L656.0 370.9 L655.0 369.9 L653.4 368.3Z M663.3 380.3 L664.4 379.5 L665.2 379.4 L666.7 380.1 L668.7 380.5 L669.2 380.0 L671.0 380.5 L672.8 381.3 L672.7 382.3 L670.7 381.9 L668.2 381.6 L666.1 381.3 L664.6 380.9Z M667.3 372.8 L667.5 371.4 L668.8 371.4 L669.6 370.5 L671.4 369.9 L672.4 368.5 L673.9 367.5 L675.2 366.0 L676.1 366.8 L677.7 367.8 L676.7 368.7 L676.2 369.9 L676.5 371.2 L677.5 372.2 L676.3 372.8 L676.0 374.1 L675.0 374.8 L675.0 376.4 L674.4 377.4 L673.0 377.4 L671.9 376.8 L670.1 376.8 L668.6 376.3 L668.3 374.7 L667.5 373.8Z M678.4 372.4 L679.4 371.9 L681.6 372.2 L683.7 371.6 L683.2 372.8 L680.1 372.8 L678.9 373.2 L679.9 374.3 L682.0 374.1 L681.1 375.0 L680.3 375.5 L681.2 376.9 L681.6 378.5 L680.6 378.3 L679.8 376.9 L679.5 376.2 L679.0 376.9 L678.9 379.0 L678.0 379.0 L677.9 376.9 L677.4 376.1 L678.1 374.3 L678.4 373.3Z M678.1 353.2 L679.8 353.3 L680.0 355.5 L679.6 357.2 L680.1 358.3 L682.1 358.9 L682.2 359.9 L680.9 358.6 L679.6 358.7 L678.6 358.1 L678.0 357.2 L678.1 355.9Z M680.5 366.0 L682.0 364.2 L683.9 362.9 L685.1 364.9 L684.8 366.5 L684.1 367.2 L682.6 366.8 L682.0 365.4 L680.7 366.0Z M680.1 360.8 L681.3 361.1 L681.6 362.7 L680.9 363.3 L680.3 362.2Z M682.5 360.0 L683.8 360.2 L683.7 362.5 L682.9 362.4 L682.6 361.3Z M675.5 364.5 L677.7 361.3 L677.9 362.0 L675.9 364.6Z M689.8 374.1 L691.4 373.7 L692.9 374.1 L693.2 375.9 L694.4 376.7 L696.8 374.9 L700.1 376.0 L699.8 382.8 L697.8 381.7 L696.9 379.0 L694.4 377.9 L692.4 377.2 L691.7 376.2 L690.3 374.8Z M673.3 381.7 L675.3 382.0 L677.4 382.0 L677.3 382.5 L674.3 382.6 L673.3 382.3Z M678.2 382.1 L681.5 381.9 L681.4 382.5 L678.2 382.6Z M681.9 384.1 L683.5 382.7 L685.5 382.1 L685.0 382.7 L682.9 384.0Z M686.2 371.4 L687.3 371.7 L687.3 374.1 L686.5 373.8Z M686.7 376.4 L689.3 376.4 L689.6 377.0 L686.9 376.9Z M670.5 397.3 L671.0 397.0 L674.1 395.6 L676.4 395.0 L678.5 394.5 L680.0 392.8 L680.0 391.6 L681.3 392.0 L681.6 390.8 L683.0 389.7 L684.1 388.3 L685.2 388.0 L686.4 389.2 L687.6 389.3 L688.3 387.5 L689.2 386.5 L691.0 386.1 L691.2 385.3 L693.5 386.3 L695.3 386.3 L694.4 387.8 L693.8 389.5 L695.7 390.7 L697.6 392.4 L698.9 392.5 L700.1 389.6 L700.1 386.7 L701.3 384.7 L702.0 388.4 L703.8 389.6 L704.1 393.7 L706.8 396.8 L708.2 400.0 L710.0 402.7 L709.9 406.7 L708.2 411.5 L706.0 414.3 L703.6 419.0 L700.3 420.3 L699.2 421.4 L697.8 420.1 L694.8 419.8 L693.6 418.6 L693.2 415.8 L692.3 415.6 L693.0 412.1 L692.8 411.6 L690.3 414.4 L689.4 412.2 L688.7 410.7 L686.4 409.7 L684.3 409.9 L681.1 410.5 L679.0 411.3 L678.2 412.5 L676.7 412.4 L674.7 412.5 L672.4 413.7 L670.9 413.6 L669.7 412.6 L669.8 411.6 L670.9 409.6 L670.6 407.1 L670.2 404.5 L669.8 402.7 L670.5 400.9 L670.3 399.0Z M567.8 332.4 L570.8 332.0 L570.5 333.9 L567.8 332.9Z M563.6 328.8 L565.0 328.8 L564.9 331.0 L563.9 331.2Z M563.9 327.0 L564.7 326.3 L564.7 328.2 L564.0 328.0Z M578.7 335.2 L581.5 335.6 L579.2 335.8Z M587.4 335.7 L589.5 335.0 L588.6 336.0Z M564.7 311.8 L564.3 306.9 L565.2 304.0 L570.3 301.8 L570.6 299.4 L573.2 295.1 L573.8 292.9 L576.7 293.7 L574.4 299.3 L574.0 301.4 L575.5 302.6 L581.8 302.4 L577.0 307.1 L574.6 310.1 L572.3 310.9 L568.3 311.7Z" fill="#0a5cbe" stroke="#0a5cbe" stroke-width="0.5" stroke-linejoin="round"/>
<text x="441.8" y="311.9" textLength="14.4" lengthAdjust="spacingAndGlyphs" style="font-size:4.6px;fill:#cfe2fb;font-weight:bold">NORTH</text>
<text x="441.8" y="316.6" textLength="18" lengthAdjust="spacingAndGlyphs" style="font-size:4.6px;fill:#cfe2fb;font-weight:bold">AMERICA</text>
<text x="488.8" y="390.4" textLength="14.4" lengthAdjust="spacingAndGlyphs" style="font-size:4.6px;fill:#cfe2fb;font-weight:bold">SOUTH</text>
<text x="486.5" y="396.9" textLength="20.5" lengthAdjust="spacingAndGlyphs" style="font-size:4.6px;fill:#cfe2fb;font-weight:bold">AMERICA</text>
<text x="556" y="315" textLength="16.4" lengthAdjust="spacingAndGlyphs" style="font-size:4.6px;fill:#cfe2fb;font-weight:bold">EUROPE</text>
<text x="638.6" y="314.8" textLength="10.5" lengthAdjust="spacingAndGlyphs" style="font-size:4.6px;fill:#8fb6ec;font-weight:normal">ASIA</text>
<text x="564.2" y="360.6" textLength="18" lengthAdjust="spacingAndGlyphs" style="font-size:4.6px;fill:#8fb6ec;font-weight:normal">AFRICA</text>
<text x="680.6" y="391" textLength="17" lengthAdjust="spacingAndGlyphs" style="font-size:4.6px;fill:#cfe2fb;font-weight:bold">OCEANIA</text>
<text x="506" y="359.4" textLength="27" lengthAdjust="spacingAndGlyphs" style="font-size:4.2px;fill:#3f639f;font-weight:normal">Atlantic Ocean</text>
<text x="611" y="381.6" textLength="25" lengthAdjust="spacingAndGlyphs" style="font-size:4.2px;fill:#3f639f;font-weight:normal">Indian Ocean</text>
<text x="625.5" y="446" textLength="31" lengthAdjust="spacingAndGlyphs" style="font-size:4.2px;fill:#3f639f;font-weight:normal">Southern Ocean</text>
<text x="441.6" y="372" textLength="10" lengthAdjust="spacingAndGlyphs" style="font-size:4.2px;fill:#3f639f;font-weight:normal">Pacific</text>
<circle cx="444.8" cy="298.1" r="4.0" fill="#a3b4dc" fill-opacity="0.5" stroke="#bcd4f6" stroke-opacity="0.95" stroke-width="0.7"/>
<circle cx="460.8" cy="330" r="16.6" fill="#a3b4dc" fill-opacity="0.5" stroke="#bcd4f6" stroke-opacity="0.95" stroke-width="0.7"/>
<circle cx="457" cy="348.3" r="3.2" fill="#a3b4dc" fill-opacity="0.5" stroke="#bcd4f6" stroke-opacity="0.95" stroke-width="0.7"/>
<circle cx="484.5" cy="368" r="4.4" fill="#a3b4dc" fill-opacity="0.5" stroke="#bcd4f6" stroke-opacity="0.95" stroke-width="0.7"/>
<circle cx="502.4" cy="380.9" r="3.5" fill="#a3b4dc" fill-opacity="0.5" stroke="#bcd4f6" stroke-opacity="0.95" stroke-width="0.7"/>
<circle cx="485.7" cy="402.9" r="3.4" fill="#a3b4dc" fill-opacity="0.5" stroke="#bcd4f6" stroke-opacity="0.95" stroke-width="0.7"/>
<circle cx="494.5" cy="407" r="3.9" fill="#a3b4dc" fill-opacity="0.5" stroke="#bcd4f6" stroke-opacity="0.95" stroke-width="0.7"/>
<circle cx="553.3" cy="307.9" r="3.5" fill="#a3b4dc" fill-opacity="0.5" stroke="#bcd4f6" stroke-opacity="0.95" stroke-width="0.7"/>
<circle cx="576.8" cy="310.9" r="3.4" fill="#a3b4dc" fill-opacity="0.5" stroke="#bcd4f6" stroke-opacity="0.95" stroke-width="0.7"/>
<circle cx="574.6" cy="311.6" r="3.0" fill="#a3b4dc" fill-opacity="0.5" stroke="#bcd4f6" stroke-opacity="0.95" stroke-width="0.7"/>
<circle cx="557.7" cy="321.8" r="3.6" fill="#a3b4dc" fill-opacity="0.5" stroke="#bcd4f6" stroke-opacity="0.95" stroke-width="0.7"/>
<circle cx="564.6" cy="320.9" r="4.6" fill="#a3b4dc" fill-opacity="0.5" stroke="#bcd4f6" stroke-opacity="0.95" stroke-width="0.7"/>
<circle cx="581.0" cy="321.6" r="3.8" fill="#a3b4dc" fill-opacity="0.5" stroke="#bcd4f6" stroke-opacity="0.95" stroke-width="0.7"/>
<circle cx="549.9" cy="330" r="4.3" fill="#a3b4dc" fill-opacity="0.5" stroke="#bcd4f6" stroke-opacity="0.95" stroke-width="0.7"/>
<circle cx="569.8" cy="328.7" r="2.8" fill="#a3b4dc" fill-opacity="0.5" stroke="#bcd4f6" stroke-opacity="0.95" stroke-width="0.7"/>
<circle cx="653.3" cy="298.7" r="4.4" fill="#a3b4dc" fill-opacity="0.5" stroke="#bcd4f6" stroke-opacity="0.95" stroke-width="0.7"/>
<circle cx="658.5" cy="335.3" r="4.7" fill="#a3b4dc" fill-opacity="0.5" stroke="#bcd4f6" stroke-opacity="0.95" stroke-width="0.7"/>
<circle cx="608.7" cy="348.6" r="4.3" fill="#a3b4dc" fill-opacity="0.5" stroke="#bcd4f6" stroke-opacity="0.95" stroke-width="0.7"/>
<circle cx="633.2" cy="350.6" r="5.0" fill="#a3b4dc" fill-opacity="0.5" stroke="#bcd4f6" stroke-opacity="0.95" stroke-width="0.7"/>
<circle cx="687.4" cy="397" r="4.0" fill="#a3b4dc" fill-opacity="0.5" stroke="#bcd4f6" stroke-opacity="0.95" stroke-width="0.7"/>
<text x="451.7" y="331.6" textLength="19" lengthAdjust="spacingAndGlyphs" style="font-size:3.2px;fill:#c9d6ee;font-weight:normal">UNITED STATES</text>
</g>
<g id="ico-ads">
<path d="M618.9 35.6 L624.3 45.2" stroke="#6ea6ee" stroke-width="4.6" stroke-linecap="round" fill="none"/>
<path d="M616.6 34.2 Q618.9 31.6 621.2 34.2" stroke="#2f86e6" stroke-width="1.6" fill="none" stroke-linecap="round"/>
<path d="M618.6 35.8 L613.4 45" stroke="#2f86e6" stroke-width="5.2" stroke-linecap="round" fill="none"/>
<path d="M618.2 37.4 L614.2 44.6" stroke="#f9bc15" stroke-width="3.2" stroke-linecap="round" fill="none"/>
<circle cx="613.6" cy="44.9" r="2.2" fill="#35a853"/>
<circle cx="616.6" cy="40.6" r="1.2" fill="#f59a23"/>
</g>
<path d="M633.8 41.3 H639.2 M636.5 38.6 V44" stroke="#fff" stroke-width="1.7" fill="none"/>
<path d="M667.4 41.3 H672.8000000000001 M670.1 38.6 V44" stroke="#fff" stroke-width="1.7" fill="none"/>
<g id="ico-crm" fill="none" stroke="#c4e2fc" stroke-width="1.35" stroke-linecap="round" stroke-linejoin="round">
<rect x="646.5" y="36.4" width="14" height="8.9" rx="4.2"/>
<rect x="-3.9" y="-1.25" width="7.8" height="2.5" rx="1.25" transform="translate(653.6 40.9) rotate(28)" stroke-width="1.1" stroke="#d9eefe"/>
</g>
<g id="ico-bi">
<rect x="679.6" y="34.5" width="12" height="12.4" rx="1.8" fill="none" stroke="#a8d3f8" stroke-width="1.2"/>
<path d="M680 44 Q683 41.5 685.5 42.8 Q688.5 44.4 691.4 41 V46.5 H680 Z" fill="#a8d3f8" opacity="0.75"/>
<circle cx="684.2" cy="37.8" r="1" fill="none" stroke="#cfe7fd" stroke-width="0.7"/>
<circle cx="688.6" cy="39.4" r="1" fill="none" stroke="#cfe7fd" stroke-width="0.7"/>
<circle cx="687.4" cy="43.6" r="1.1" fill="#0a559f" stroke="#cfe7fd" stroke-width="0.7"/>
<path d="M684.6 38.8 L686.9 42.6 M688.4 40.4 L687.7 42.5" stroke="#cfe7fd" stroke-width="0.5"/>
</g>
</g></svg></body></html>
